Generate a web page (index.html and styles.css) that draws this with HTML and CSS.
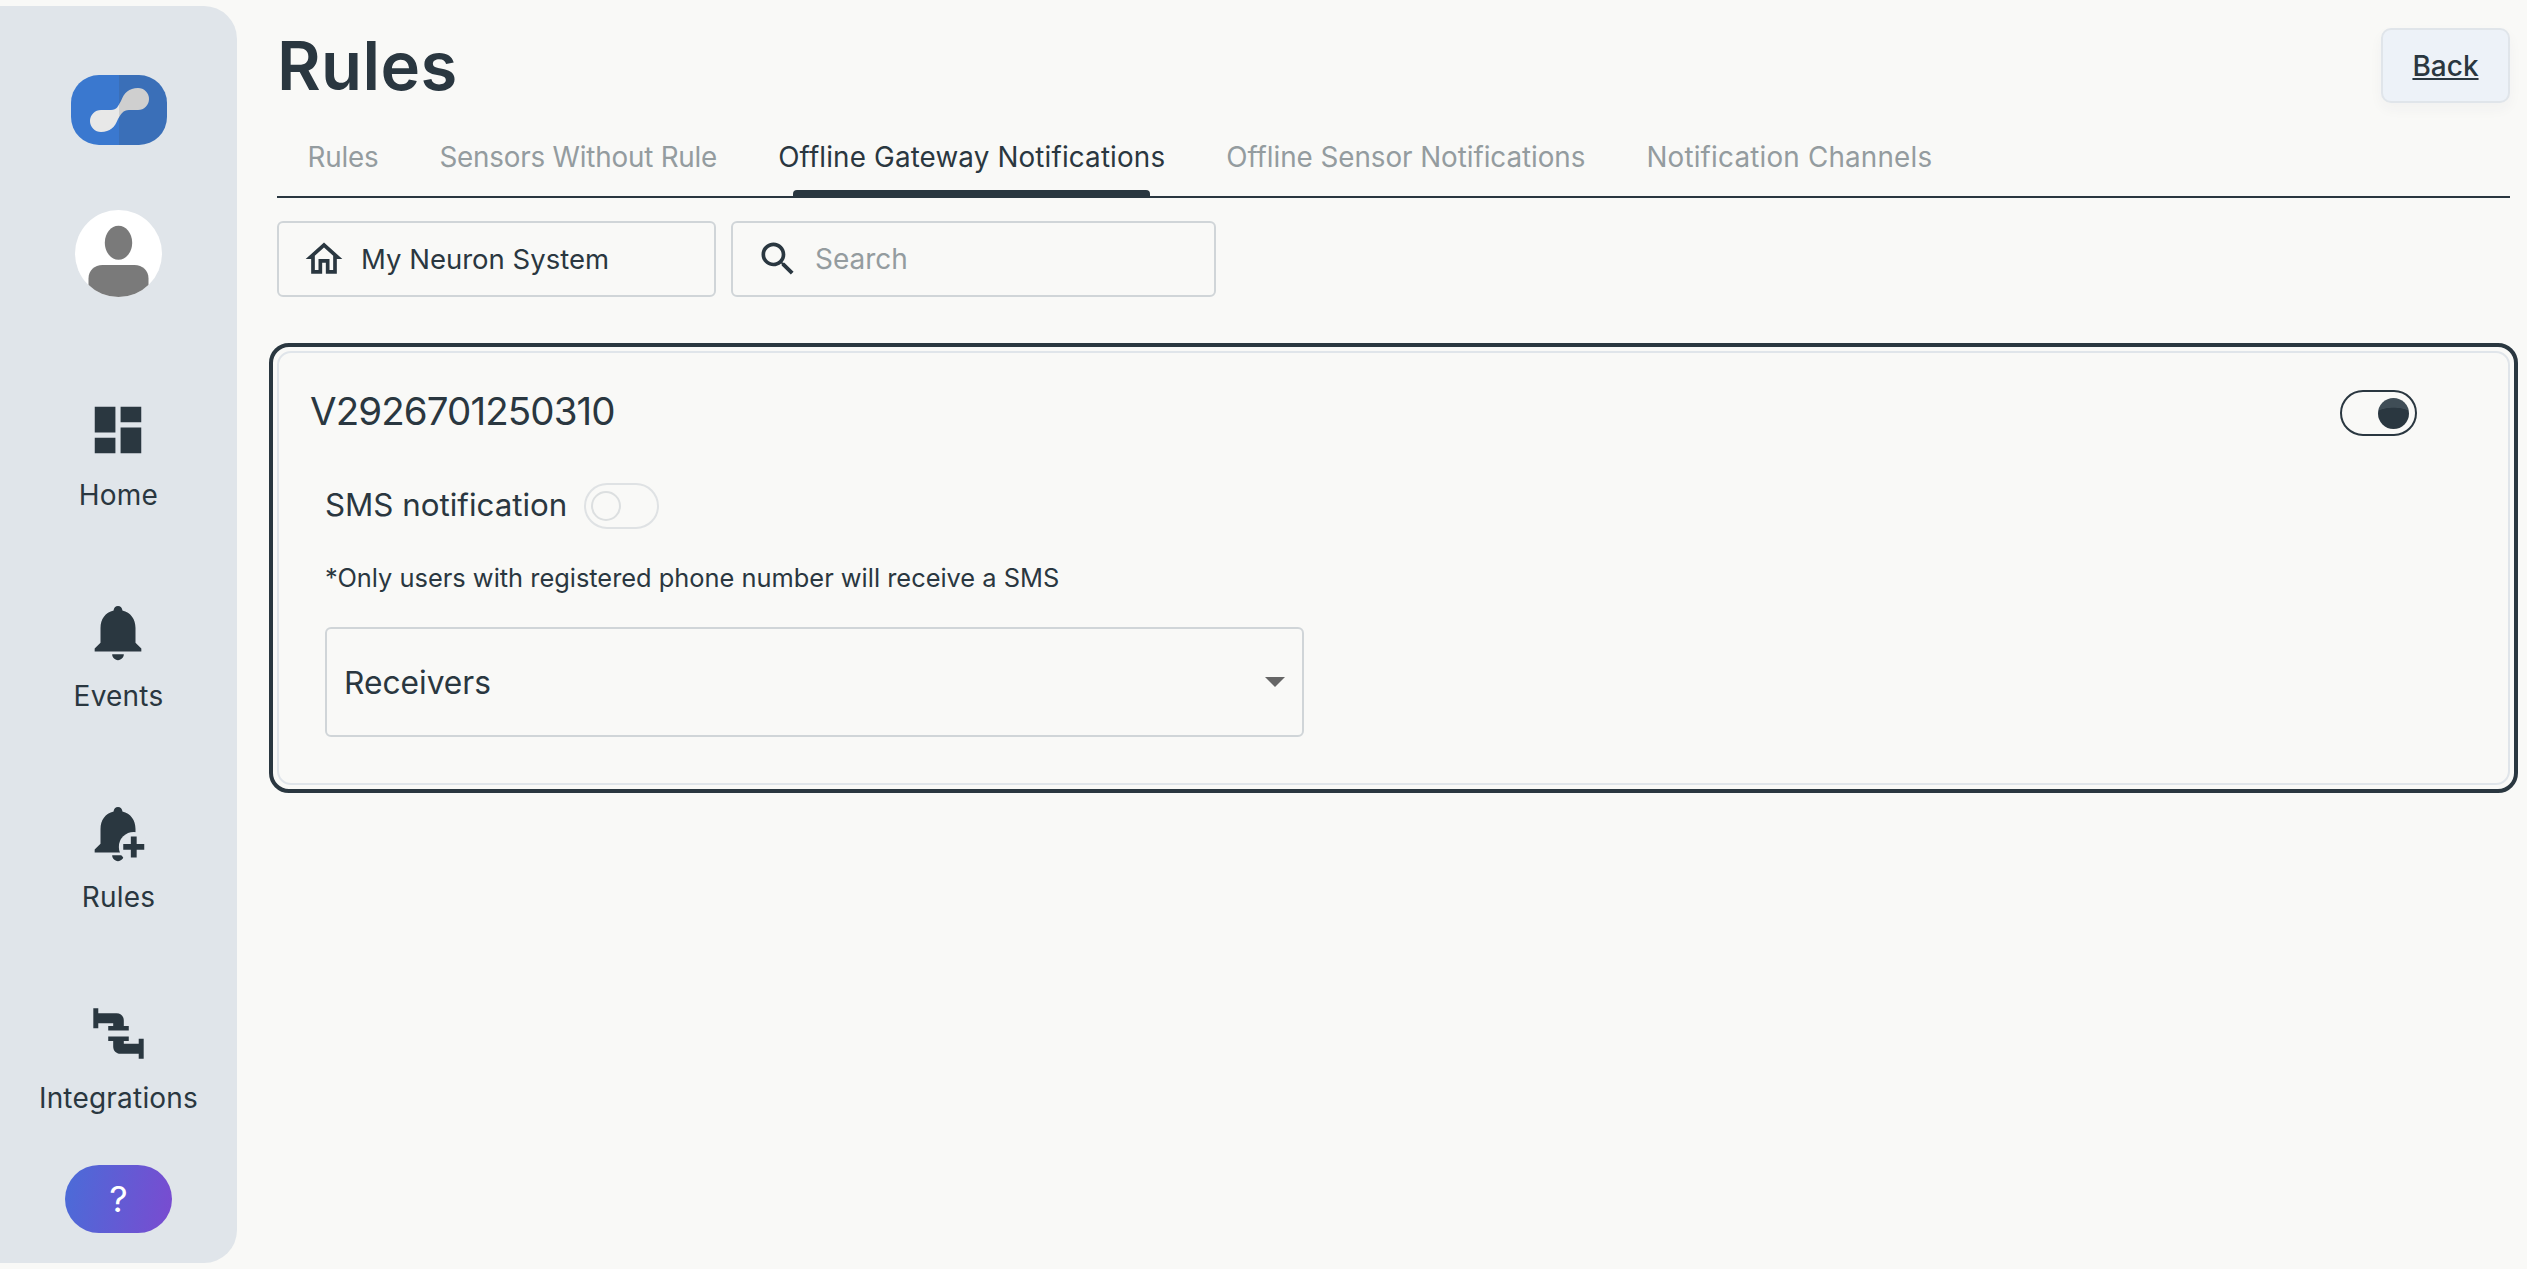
FILE: index.html
```html
<!DOCTYPE html>
<html lang="en">
<head>
<meta charset="utf-8">
<title>Rules</title>
<link rel="stylesheet" href="styles.css">
</head>
<body>
<aside class="sidebar">
  <svg class="logo" viewBox="0 0 96 70">
    <defs>
      <linearGradient id="logoBg" x1="0" x2="1" y1="0" y2="0">
        <stop offset="0.505" stop-color="#3a78cf"/><stop offset="0.505" stop-color="#3a6fb8"/>
      </linearGradient>
      <linearGradient id="logoFg" gradientUnits="userSpaceOnUse" x1="0" x2="96" y1="0" y2="0">
        <stop offset="0.505" stop-color="#e8e8e8"/><stop offset="0.505" stop-color="#cfcfcf"/>
      </linearGradient>
    </defs>
    <rect width="96" height="70" rx="28" fill="url(#logoBg)"/>
    <path fill="url(#logoFg)" d="M30 35H40C46 35 47 31 50 26C53 18 58 13 67 13A11 11 0 0 1 67 35H58C52 35 50 39 47 44C44 52 39 57 30 57A11 11 0 0 1 30 35Z"/>
  </svg>
  <svg class="avatar" viewBox="0 0 87 87">
    <ellipse cx="43.5" cy="32.7" rx="13.7" ry="17" fill="#7a7a7a"/>
    <path d="M13.5 87V68.500C13.500 60.500 19.500 55 27.500 55H59.500C67.500 55 73.500 60.500 73.500 68.500V87Z" fill="#7a7a7a"/>
  </svg>
  <nav class="nav">
    <a class="nav-item">
      <span class="nav-icon"><svg class="icon-home" viewBox="0 0 24 24"><path d="M3 13h8V3H3v10zm0 8h8v-6H3v6zm10 0h8V11h-8v10zm0-18v6h8V3h-8z"/></svg></span>
      <span class="nav-label">Home</span>
    </a>
    <a class="nav-item">
      <span class="nav-icon"><svg class="icon-bell" viewBox="0 0 24 24"><path d="M12 22c1.100 0 2-.9 2-2h-4c0 1.100.89 2 2 2zm6-6v-5c0-3.070-1.640-5.300-4.500-6V4.900c0-.83-.67-1.500-1.500-1.500s-1.500.67-1.500 1.500V5C7.630 5.700 6 7.920 6 11v5l-2 2v1h16v-1l-2-2z"/></svg></span>
      <span class="nav-label">Events</span>
    </a>
    <a class="nav-item">
      <span class="nav-icon"><svg class="icon-bell" viewBox="0 0 24 24"><path d="M12 22c1.100 0 2-.9 2-2h-4c0 1.100.89 2 2 2zm6-6v-5c0-3.070-1.640-5.300-4.500-6V4.900c0-.83-.67-1.500-1.500-1.500s-1.500.67-1.500 1.500V5C7.630 5.700 6 7.920 6 11v5l-2 2v1h16v-1l-2-2z"/><circle class="cut" cx="17.400" cy="17.100" r="5.100"/><path d="M16.400 13.500h2v2.600H21v2h-2.600v2.600h-2v-2.600h-2.600v-2h2.600z"/></svg></span>
      <span class="nav-label">Rules</span>
    </a>
    <a class="nav-item">
      <span class="nav-icon"><svg class="icon-pipes" viewBox="270 195 172 172"><path d="M280 205h15v15h55c13 0 22 9 22 22v16h15v14h-62v-14h15v-8h-45v15h-15z"/><path d="M432 357h-15v-15h-55c-13 0-22-9-22-22v-16h-15v-14h62v14h-15v8h45v-15h15z"/></svg></span>
      <span class="nav-label">Integrations</span>
    </a>
  </nav>
  <button class="help">?</button>
</aside>
<main class="main">
  <header class="head">
    <h1 class="title">Rules</h1>
    <a class="back">Back</a>
  </header>
  <div class="tabs">
    <span class="tab tab-tight">Rules</span>
    <span class="tab tab-tight">Sensors Without Rule</span>
    <span class="tab tab-active">Offline Gateway Notifications</span>
    <span class="tab tab-slim">Offline Sensor Notifications</span>
    <span class="tab tab-wide">Notification Channels</span>
  </div>
  <div class="toolbar">
    <div class="control control-site">
      <svg class="control-icon" viewBox="0 0 24 24"><path d="M12 5.690l5 4.500V18h-2v-6H9v6H7v-7.810l5-4.500M12 3L2 12h3v8h6v-6h2v6h6v-8h3L12 3z"/></svg>
      <span>My Neuron System</span>
    </div>
    <div class="control control-search">
      <svg class="control-icon" viewBox="0 0 24 24"><path d="M15.500 14h-.79l-.28-.27C15.410 12.590 16 11.110 16 9.500 16 5.910 13.090 3 9.500 3S3 5.910 3 9.500 5.910 16 9.500 16c1.610 0 3.090-.59 4.230-1.570l.27.28v.79l5 4.990L20.490 19l-4.990-5zm-6 0C7.010 14 5 11.990 5 9.500S7.010 5 9.500 5 14 7.010 14 9.500 11.990 14 9.500 14z"/></svg>
      <span class="placeholder">Search</span>
    </div>
  </div>
  <section class="card">
    <div class="card-inner">
      <div class="card-head">
        <h2 class="card-title">V2926701250310</h2>
        <span class="switch switch-on"><span class="knob"></span></span>
      </div>
      <div class="card-body">
        <div class="sms-row">
          <span class="sms-label">SMS notification</span>
          <span class="switch switch-off"><span class="knob"></span></span>
        </div>
        <p class="note">*Only users with registered phone number will receive a SMS</p>
        <div class="field">
          <span>Receivers</span>
          <span class="caret"></span>
        </div>
      </div>
    </div>
  </section>
</main>
</body>
</html>
```

FILE: styles.css
```css
* { box-sizing: border-box; }
html, body { height: 100%; }
body {
  margin: 0;
  display: flex;
  height: 100vh;
  overflow: hidden;
  background: #f9f9f7;
  color: #2a3740;
  font-family: Inter, "Liberation Sans", sans-serif;
}
.sidebar {
  flex: 0 0 237px;
  margin: 6px 0;
  padding: 69px 0 30px;
  background: #e0e5ea;
  border-radius: 0 33px 33px 0;
  display: flex;
  flex-direction: column;
  align-items: center;
}
.logo { width: 96px; height: 70px; display: block; }
.avatar {
  width: 87px;
  height: 87px;
  margin-top: 65px;
  display: block;
  background: #fff;
  border-radius: 50%;
}
.nav {
  margin-top: 98px;
  display: flex;
  flex-direction: column;
  gap: 86px;
  align-items: center;
}
.nav-item { display: flex; flex-direction: column; align-items: center; }
.nav-icon {
  width: 70px;
  height: 70px;
  display: flex;
  align-items: center;
  justify-content: center;
}
.nav-icon svg { fill: #2a3740; display: block; }
.icon-home { width: 62px; height: 62px; }
.icon-bell { width: 70px; height: 70px; }
.icon-pipes { width: 57px; height: 57px; }
.cut { fill: #e0e5ea; }
.nav-label {
  margin-top: 15px;
  font-size: 28px;
  letter-spacing: 0.2px;
  line-height: 30px;
  white-space: nowrap;
}
.help {
  margin-top: auto;
  width: 107px;
  height: 68px;
  border: 0;
  border-radius: 34px;
  background: linear-gradient(100deg, #4a6cd8, #7a4bd0);
  color: #fff;
  font: 400 36px Inter, sans-serif;
}
.main {
  flex: 1;
  min-width: 0;
  padding: 0 17px 0 40px;
}
.head {
  height: 128px;
  padding-top: 28px;
  display: flex;
  justify-content: space-between;
  align-items: flex-start;
}
.title {
  margin: 0;
  font-size: 67px;
  line-height: 76px;
  font-weight: 600;
  letter-spacing: 0.4px;
}
.back {
  width: 129px;
  height: 75px;
  display: flex;
  align-items: center;
  justify-content: center;
  background: #edf2f8;
  border: 2px solid #e0e5ea;
  border-radius: 10px;
  box-shadow: 0 6px 14px rgba(42, 55, 64, 0.04);
  font-size: 28px;
  font-weight: 500;
  text-decoration: underline;
}
.tabs {
  height: 70px;
  display: flex;
  border-bottom: 2px solid #2a3740;
}
.tab {
  position: relative;
  height: 68px;
  padding: 0 30.5px;
  font-size: 27.8px;
  line-height: 58px;
  color: #949c9f;
  white-space: nowrap;
}
.tab-tight { letter-spacing: -0.2px; }
.tab-slim { letter-spacing: -0.05px; }
.tab-wide { letter-spacing: 0.2px; }
.tab-active { color: #2a3740; letter-spacing: 0.15px; }
.tab-active::after {
  content: "";
  position: absolute;
  left: 45px;
  right: 46px;
  bottom: -2px;
  height: 8px;
  background: #2a3740;
  border-radius: 4px 4px 0 0;
}
.toolbar {
  margin-top: 23px;
  display: flex;
  gap: 15px;
}
.control {
  height: 76px;
  display: flex;
  align-items: center;
  border: 2px solid #d0d5d8;
  border-radius: 6px;
  font-size: 28px;
}
.control-site { width: 439px; padding-left: 23px; gap: 15px; font-size: 27.5px; }
.control-search { width: 485px; padding-left: 23px; gap: 15px; }
.control-icon { width: 44px; height: 44px; fill: #2a3740; flex: none; }
.placeholder { color: #949c9f; }
.card {
  margin: 46px -8px 0 -8px;
  padding: 4px;
  height: 450px;
  border: 4px solid #2a3740;
  border-radius: 20px;
}
.card-inner {
  height: 100%;
  padding: 0 91px 0 31px;
  border: 2px solid #e0e5ea;
  border-radius: 14px;
}
.card-head {
  height: 120px;
  display: flex;
  justify-content: space-between;
  align-items: center;
}
.card-title {
  margin: -4px 0 0;
  font-size: 38.5px;
  font-weight: 400;
  letter-spacing: -0.9px;
}
.switch {
  display: flex;
  align-items: center;
  width: 77px;
  height: 46px;
  border-radius: 23px;
  flex: none;
}
.switch-on {
  justify-content: flex-end;
  padding-right: 6px;
  border: 2.5px solid #2a3740;
}
.switch-on .knob {
  width: 31px;
  height: 31px;
  border-radius: 50%;
  background: radial-gradient(ellipse 130% 100% at 50% 110%, #2a3740 78%, #3f4d56 80%);
}
.switch-off {
  width: 75px;
  padding-left: 5px;
  border: 2.5px solid #dfe2e4;
}
.switch-off .knob {
  width: 30px;
  height: 30px;
  border-radius: 50%;
  border: 2px solid #dcdfe0;
  background: #f9f9f7;
}
.card-body { padding-left: 15px; }
.sms-row {
  margin-top: 10px;
  height: 46px;
  display: flex;
  align-items: center;
  gap: 17px;
}
.sms-label { font-size: 31.3px; margin-top: -2px; }
.note {
  margin: 29px 0 0;
  font-size: 25.4px;
  line-height: 40px;
}
.field {
  margin-top: 29px;
  width: 979px;
  height: 110px;
  padding: 0 17px 0 17px;
  display: flex;
  justify-content: space-between;
  align-items: center;
  border: 2px solid #d0d5d8;
  border-radius: 6px;
  font-size: 31.7px;
}
.caret {
  width: 0;
  height: 0;
  border-left: 10px solid transparent;
  border-right: 10px solid transparent;
  border-top: 10px solid #666;
}
```
